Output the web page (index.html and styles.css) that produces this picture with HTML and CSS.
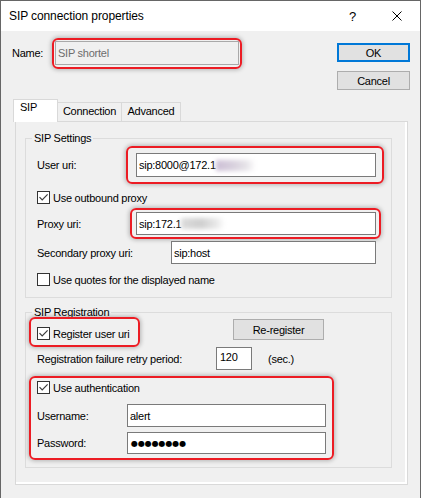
FILE: index.html
```html
<!DOCTYPE html>
<html lang="en">
<head>
<meta charset="utf-8">
<title>SIP connection properties</title>
<link rel="stylesheet" href="styles.css">
</head>
<body>
<div class="window">
  <div class="titlebar">
    <span class="title">SIP connection properties</span>
    <span class="help">?</span>
    <svg class="close" width="10" height="10" viewBox="0 0 10 10"><path d="M0.5 0.5 L9.5 9.5 M9.5 0.5 L0.5 9.5" stroke="#000" stroke-width="1" fill="none"/></svg>
  </div>

  <div class="top">
    <div class="name-row">
      <span class="name-label">Name:</span>
      <div class="hl hl-name"><div class="field field-name">SIP shortel</div></div>
    </div>
    <div class="buttons">
      <div class="btn btn-default">OK</div>
      <div class="btn">Cancel</div>
    </div>
  </div>

  <div class="tabs">
    <div class="tab-strip">
      <div class="tab tab-sip">SIP</div>
      <div class="tab tab-conn">Connection</div>
      <div class="tab tab-adv">Advanced</div>
    </div>
    <div class="panel">
      <fieldset class="group group-settings">
        <legend>SIP Settings</legend>
        <div class="group-body body-settings">
          <div class="row row-user">
            <span class="lbl lbl-uri">User uri:</span>
            <div class="hl hl-user"><div class="field field-wide field-user">sip:8000@172.1<span class="blur blur-user"></span></div></div>
          </div>
          <div class="check check-outbound"><span class="cb"><svg width="11" height="11" viewBox="0 0 11 11"><path d="M1.5 5.2 L4.2 8 L9.6 2.4" fill="none" stroke="#3c3c3c" stroke-width="1.2"/></svg></span><span>Use outbound proxy</span></div>
          <div class="row row-proxy">
            <span class="lbl lbl-uri">Proxy uri:</span>
            <div class="hl hl-proxy"><div class="field field-wide">sip:172.1<span class="blur blur-proxy"></span></div></div>
          </div>
          <div class="row row-secondary">
            <span class="lbl lbl-secondary">Secondary proxy uri:</span>
            <div class="field field-secondary">sip:host</div>
          </div>
          <div class="check check-quotes"><span class="cb"></span><span>Use quotes for the displayed name</span></div>
        </div>
      </fieldset>

      <fieldset class="group group-reg">
        <legend>SIP Registration</legend>
        <div class="group-body body-reg">
          <div class="row-reg">
            <div class="hl hl-reg">
              <div class="check check-reg"><span class="cb"><svg width="11" height="11" viewBox="0 0 11 11"><path d="M1.5 5.2 L4.2 8 L9.6 2.4" fill="none" stroke="#3c3c3c" stroke-width="1.2"/></svg></span><span>Register user uri</span></div>
            </div>
            <div class="btn btn-rereg">Re-register</div>
          </div>
          <div class="row row-retry">
            <span class="lbl lbl-retry">Registration failure retry period:</span>
            <div class="field field-num">120</div>
            <span class="unit">(sec.)</span>
          </div>
          <div class="hl hl-auth">
            <div class="check"><span class="cb"><svg width="11" height="11" viewBox="0 0 11 11"><path d="M1.5 5.2 L4.2 8 L9.6 2.4" fill="none" stroke="#3c3c3c" stroke-width="1.2"/></svg></span><span>Use authentication</span></div>
            <div class="row row-username">
              <span class="lbl lbl-auth">Username:</span>
              <div class="field field-auth">alert</div>
            </div>
            <div class="row row-password">
              <span class="lbl lbl-auth">Password:</span>
              <div class="field field-auth field-pass"><span class="dots">●●●●●●●●</span></div>
            </div>
          </div>
        </div>
      </fieldset>
    </div>
  </div>
</div>
</body>
</html>
```

FILE: styles.css
```css
* {
  box-sizing: border-box;
}

html,
body {
  margin: 0;
  padding: 0;
}

body {
  background: #f0f0f0;
  font-family: "Liberation Sans", Arial, sans-serif;
  font-size: 11px;
  letter-spacing: -0.25px;
  color: #000;
}

.window {
  width: 421px;
  height: 498px;
  border: 1px solid #666;
  border-bottom: none;
  background: #f0f0f0;
  overflow: hidden;
}

/* title bar */
.titlebar {
  height: 30px;
  background: #fff;
  display: flex;
  align-items: center;
  padding-left: 8px;
}

.title {
  flex: 1;
  font-size: 12px;
  letter-spacing: -0.1px;
}

.help {
  width: 8px;
  margin-right: 35px;
  font-size: 13px;
  letter-spacing: 0;
}

.close {
  margin-right: 18px;
  display: block;
}

/* name + buttons */
.top {
  display: flex;
  justify-content: space-between;
  padding: 0 10px 0 11px;
  height: 68px;
}

.name-row {
  display: flex;
  align-items: center;
  margin-top: 10px;
  height: 24px;
}

.name-label {
  width: 43px;
}

.buttons {
  display: flex;
  flex-direction: column;
  gap: 9px;
  margin-top: 12px;
}

.btn {
  width: 73px;
  height: 19px;
  background: #e1e1e1;
  border: 1px solid #adadad;
  display: flex;
  align-items: center;
  justify-content: center;
}

.btn-default {
  border: 2px solid #0078d7;
}

.btn-rereg {
  width: 91px;
  height: 21px;
}

/* fields */
.field {
  background: #fff;
  border: 1px solid #7a7a7a;
  height: 23px;
  display: flex;
  align-items: center;
  padding-left: 2px;
  white-space: nowrap;
  overflow: hidden;
}

.field-name {
  width: 184px;
  height: 24px;
  background: #f0f0f0;
  border-color: #a9a9a9;
  color: #6d6d6d;
}

.field-wide {
  width: 240px;
}

.field-user {
  height: 24px;
}

.field-secondary {
  width: 205px;
}

.field-num {
  width: 36px;
  align-items: flex-start;
  padding: 3px 0 0 3px;
}

.field-auth {
  width: 199px;
}

.field-pass {
  height: 22px;
}

.dots {
  font-family: "DejaVu Sans", sans-serif;
  font-size: 8px;
  letter-spacing: -0.1px;
  margin-left: 1px;
}

.blur {
  display: inline-block;
  height: 11px;
  filter: blur(2px);
}

.blur-user {
  width: 40px;
  background: linear-gradient(90deg, #cdbfd6, #d9d2de 45%, #e6e3e8 75%, #fff);
}

.blur-proxy {
  width: 44px;
  background: linear-gradient(90deg, #dcdcdc, #cfcfcf 45%, #e8e8e8 80%, #fff);
}

/* red annotation outlines */
.hl {
  border: 2px solid #ec1c24;
  border-radius: 6px;
  box-shadow: 0 0 4px 1px rgba(0, 0, 0, 0.25);
}

.hl-name {
  padding: 1px 1px 2px 1px;
  margin: -3px -3px -4px -3px;
}

.hl-user {
  padding: 5px 6px 5px 8px;
  margin: -7px -8px -7px -10px;
}

.hl-proxy {
  padding: 2px 3px 2px 4px;
  margin: -4px -5px -4px -6px;
}

.hl-reg {
  width: fit-content;
  padding: 8px 7px 5px 6px;
  margin: -2px -9px -7px -8px;
}

.hl-auth {
  width: 305px;
  padding: 3px 6px 4px 6px;
  margin: 6px 0 -6px -8px;
}

/* tabs */
.tabs {
  margin: 0 12px 0 14px;
}

.tab-strip {
  display: flex;
  align-items: flex-end;
  height: 22px;
}

.tab {
  height: 19px;
  border: 1px solid #d9d9d9;
  border-bottom: none;
  background: #f0f0f0;
  text-align: center;
  line-height: 13px;
  padding-top: 2px;
  margin-left: -1px;
}

.tab-sip {
  width: 45px;
  height: 23px;
  margin-left: -2px;
  margin-bottom: -1px;
  padding: 1px 0 0 6px;
  text-align: left;
  background: #fff;
  position: relative;
  z-index: 1;
}

.tab-conn {
  width: 65px;
}

.tab-adv {
  width: 60px;
}

.panel {
  height: 364px;
  border: 1px solid #d9d9d9;
  box-shadow: inset -2px -2px 0 #fff;
  padding: 0 15px 0 9px;
}

/* group boxes */
.group {
  margin: 0;
  padding: 0;
  border: 1px solid #dcdcdc;
  min-width: 0;
}

.group legend {
  margin-left: 6px;
  padding: 0 2px;
  line-height: 13px;
}

.group-settings {
  margin-top: 10px;
}

.group-reg {
  margin-top: 8px;
}

.group-body {
  padding: 0 0 11px 11px;
}

.body-reg {
  padding-bottom: 13px;
}

.row {
  display: flex;
  align-items: center;
}

.lbl-uri {
  width: 99px;
}

.lbl-secondary {
  width: 134px;
}

.lbl-retry {
  width: 179px;
}

.lbl-auth {
  width: 90px;
}

.unit {
  margin-left: 16px;
}

.row-user {
  margin-top: 8px;
}

.check {
  display: flex;
  align-items: center;
  gap: 3px;
  height: 13px;
}

.check-outbound {
  margin-top: 14px;
}

.row-proxy {
  margin-top: 8px;
}

.row-secondary {
  margin-top: 6px;
}

.check-quotes {
  margin-top: 9px;
}

.cb {
  width: 13px;
  height: 13px;
  border: 1px solid #333;
  background: #fff;
  display: inline-flex;
  flex: none;
}

.cb svg {
  display: block;
}

.row-reg {
  display: grid;
  grid-template-columns: 196px 91px;
  align-items: start;
}

.check-reg {
  width: 94px;
}

.row-retry {
  margin-top: 7px;
}

.row-username {
  margin-top: 10px;
}

.row-password {
  margin-top: 5px;
}
```
